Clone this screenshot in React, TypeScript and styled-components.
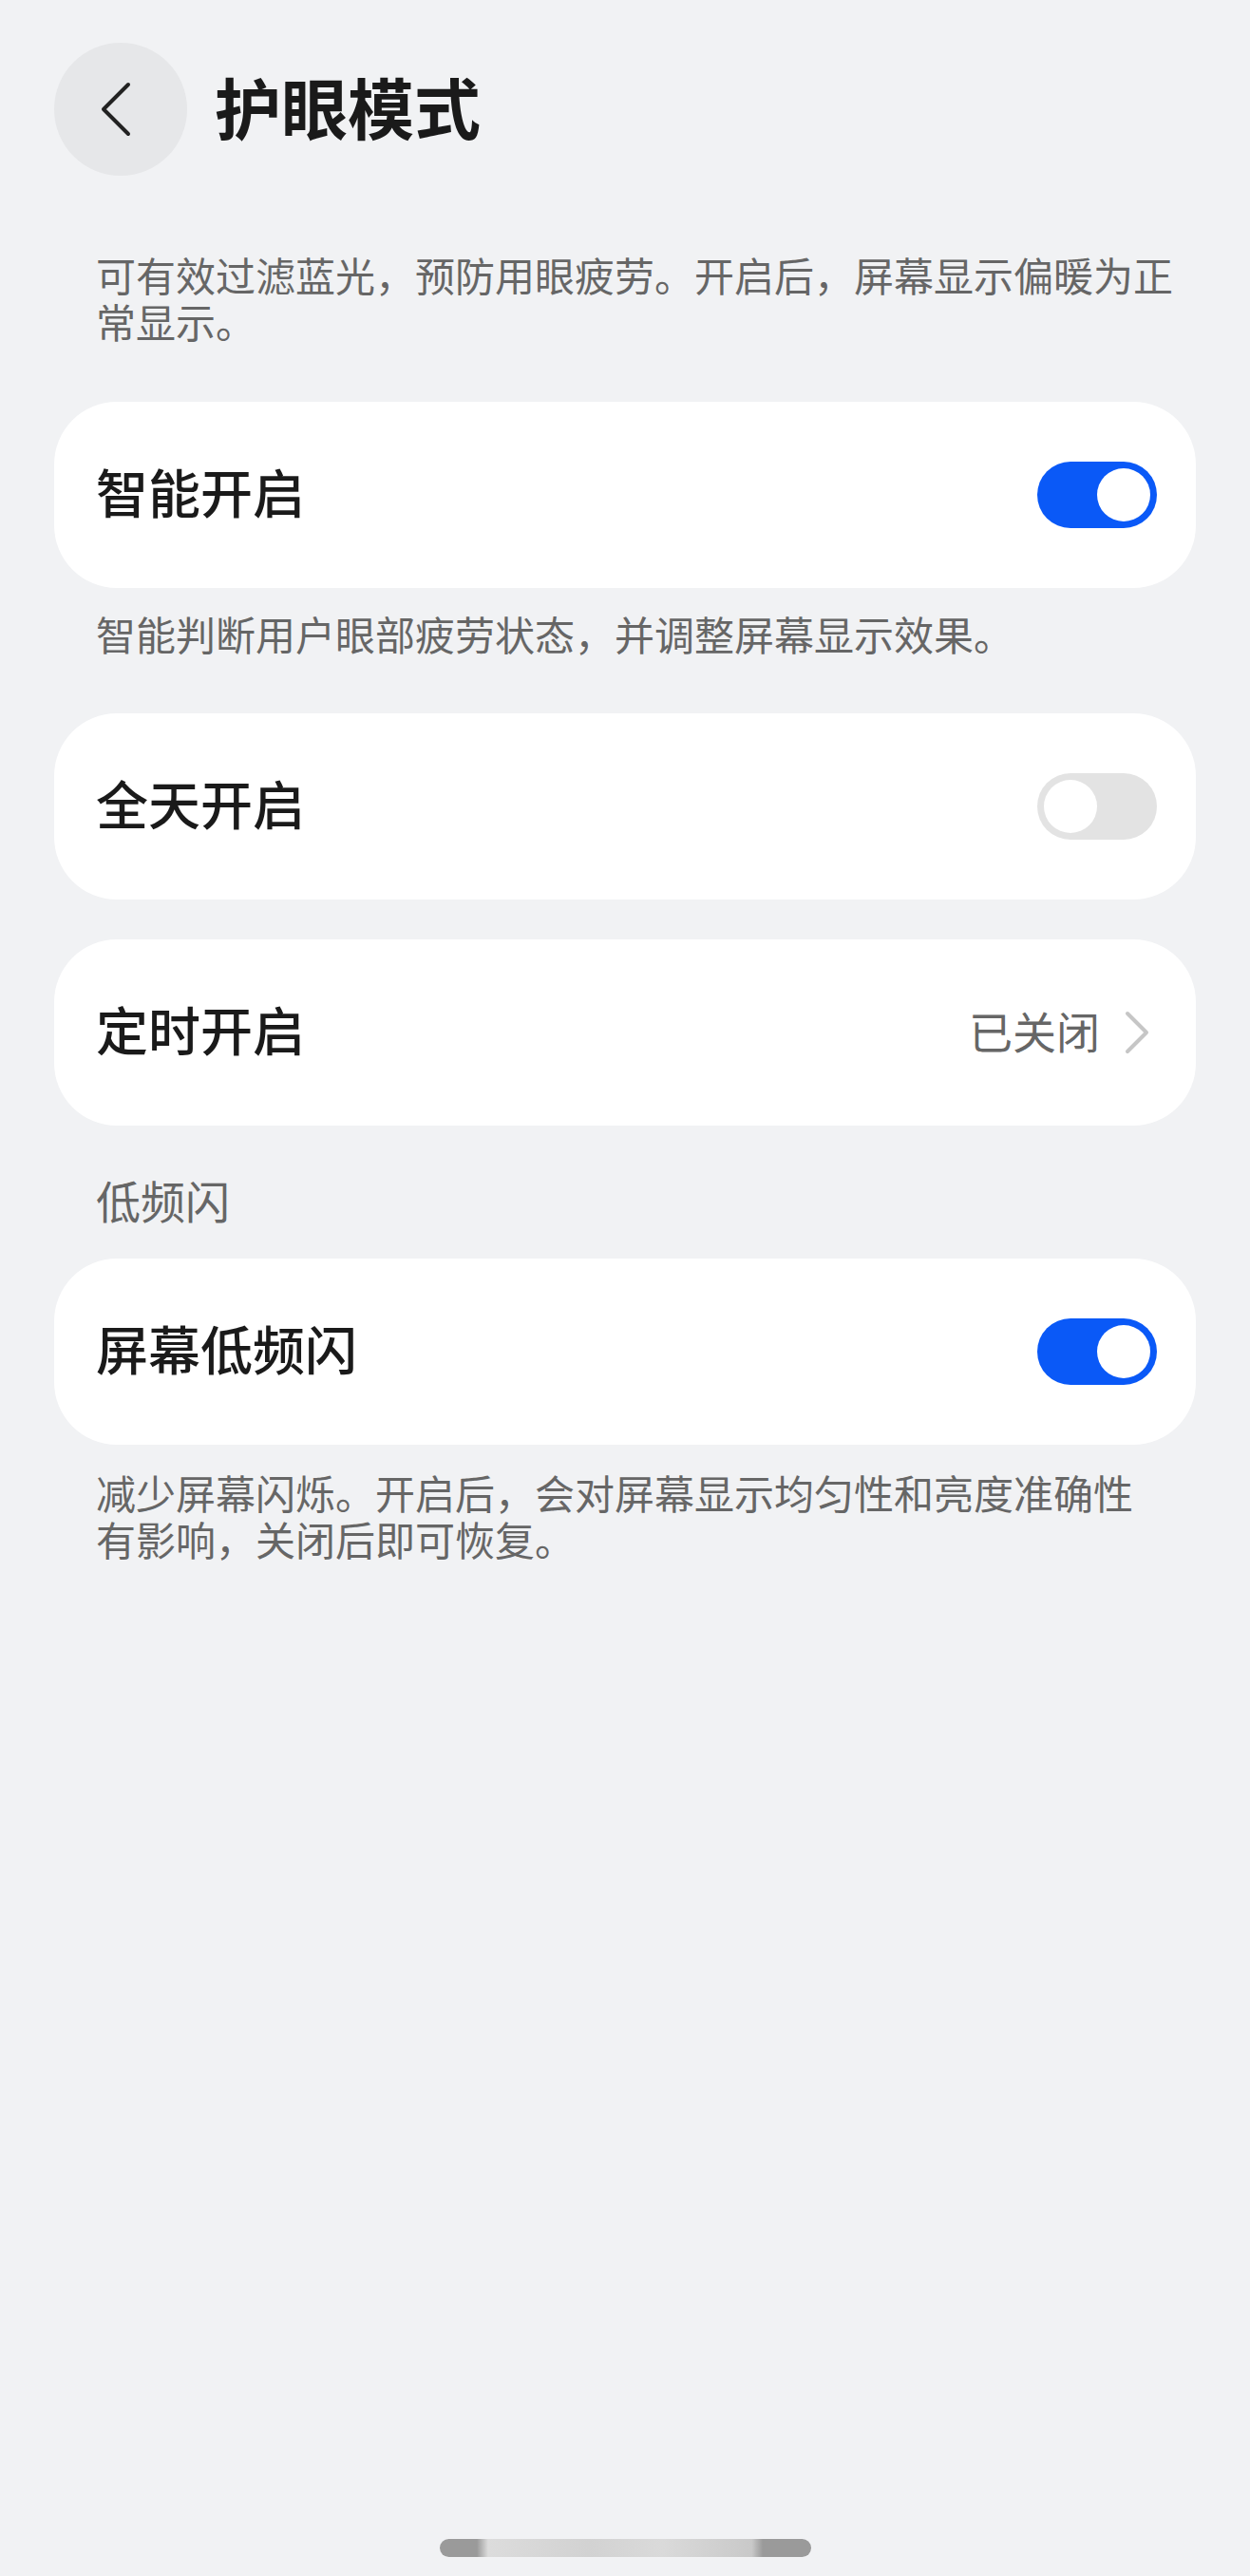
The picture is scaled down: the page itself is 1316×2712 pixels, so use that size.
import React from "react";
import styled, { createGlobalStyle } from "styled-components";

const GlobalStyle = createGlobalStyle`
  html, body {
    margin: 0;
    padding: 0;
    background: #f1f2f4;
  }
  body {
    font-family: "Noto Sans CJK SC", "Noto Sans", sans-serif;
    -webkit-font-smoothing: antialiased;
  }
  * { box-sizing: border-box; }
`;

const Page = styled.div`
  width: 1316px;
  min-height: 2712px;
  background: #f1f2f4;
  padding: 45px 57px 20px;
  display: flex;
  flex-direction: column;
`;

const Header = styled.header`
  display: flex;
  align-items: center;
  height: 140px;
`;

const BackButton = styled.button`
  width: 140px;
  height: 140px;
  border-radius: 50%;
  border: none;
  background: #e6e7e9;
  display: flex;
  align-items: center;
  justify-content: center;
  padding: 0 10px 0 0;
  cursor: pointer;
  flex-shrink: 0;
`;

const Title = styled.h1`
  margin: 0 0 0 29px;
  padding-bottom: 7px;
  font-family: "Noto Sans CJK SC", sans-serif;
  font-size: 70px;
  line-height: 1;
  font-weight: 700;
  color: #1a1a1a;
`;

const Note = styled.p<{ $top: number }>`
  margin: ${(p) => p.$top}px -20px 0 0;
  padding: 0 0 0 44px;
  font-size: 42px;
  line-height: 49px;
  color: #666666;
  font-weight: 400;
`;

const NoteLine = styled.span`
  display: block;
  white-space: nowrap;
`;

const SectionTitle = styled.h2`
  margin: 50px 0 0;
  padding: 0 44px;
  font-size: 47px;
  line-height: 56px;
  font-weight: 400;
  color: #666666;
`;

const Card = styled.div<{ $top: number }>`
  margin-top: ${(p) => p.$top}px;
  height: 196px;
  background: #ffffff;
  border-radius: 66px;
  display: flex;
  align-items: center;
  justify-content: space-between;
  padding: 0 41px 0 44px;
`;

const Label = styled.span`
  padding-bottom: 10px;
  font-size: 55px;
  line-height: 1;
  font-weight: 500;
  color: #1a1a1a;
`;

const Trailing = styled.div`
  display: flex;
  align-items: center;
  gap: 25px;
  padding-right: 7px;
`;

const Value = styled.span`
  padding-bottom: 7px;
  font-size: 46px;
  line-height: 1;
  color: #666666;
`;

const Track = styled.div<{ $on: boolean }>`
  width: 126px;
  height: 70px;
  border-radius: 35px;
  background: ${(p) => (p.$on ? "#0a59f7" : "#e3e3e3")};
  padding: 7px;
  display: flex;
  justify-content: ${(p) => (p.$on ? "flex-end" : "flex-start")};
`;

const Knob = styled.div`
  width: 56px;
  height: 56px;
  border-radius: 50%;
  background: #ffffff;
`;

const HomeBar = styled.div`
  margin: auto auto 0;
  width: 391px;
  height: 19px;
  border-radius: 10px;
  background: linear-gradient(
    90deg,
    #9a9a9a 0%,
    #9a9a9a 10%,
    #dcdcdc 13%,
    #d2d2d2 40%,
    #dadada 60%,
    #c9c9c9 84%,
    #9a9a9a 87%,
    #9a9a9a 100%
  );
`;

const Toggle: React.FC<{ on: boolean }> = ({ on }) => (
  <Track $on={on}>
    <Knob />
  </Track>
);

const ChevronLeft = () => (
  <svg width="34" height="60" viewBox="0 0 34 60" fill="none">
    <path
      d="M30 4 L4 30 L30 56"
      stroke="#222222"
      strokeWidth="4"
      strokeLinecap="round"
      strokeLinejoin="round"
    />
  </svg>
);

const ChevronRight = () => (
  <svg width="28" height="46" viewBox="0 0 28 46" fill="none">
    <path
      d="M4 3 L24 23 L4 43"
      stroke="#c6c6c6"
      strokeWidth="4"
      strokeLinecap="round"
      strokeLinejoin="round"
    />
  </svg>
);

export default function App() {
  return (
    <>
      <GlobalStyle />
      <Page>
        <Header>
          <BackButton aria-label="返回">
            <ChevronLeft />
          </BackButton>
          <Title>护眼模式</Title>
        </Header>

        <Note $top={79}>
          <NoteLine>可有效过滤蓝光，预防用眼疲劳。开启后，屏幕显示偏暖为正</NoteLine>
          <NoteLine>常显示。</NoteLine>
        </Note>

        <Card $top={61}>
          <Label>智能开启</Label>
          <Toggle on />
        </Card>
        <Note $top={23}>
          <NoteLine>智能判断用户眼部疲劳状态，并调整屏幕显示效果。</NoteLine>
        </Note>

        <Card $top={60}>
          <Label>全天开启</Label>
          <Toggle on={false} />
        </Card>

        <Card $top={42}>
          <Label>定时开启</Label>
          <Trailing>
            <Value>已关闭</Value>
            <ChevronRight />
          </Trailing>
        </Card>

        <SectionTitle>低频闪</SectionTitle>
        <Card $top={34}>
          <Label>屏幕低频闪</Label>
          <Toggle on />
        </Card>
        <Note $top={25}>
          <NoteLine>减少屏幕闪烁。开启后，会对屏幕显示均匀性和亮度准确性</NoteLine>
          <NoteLine>有影响，关闭后即可恢复。</NoteLine>
        </Note>

        <HomeBar />
      </Page>
    </>
  );
}
